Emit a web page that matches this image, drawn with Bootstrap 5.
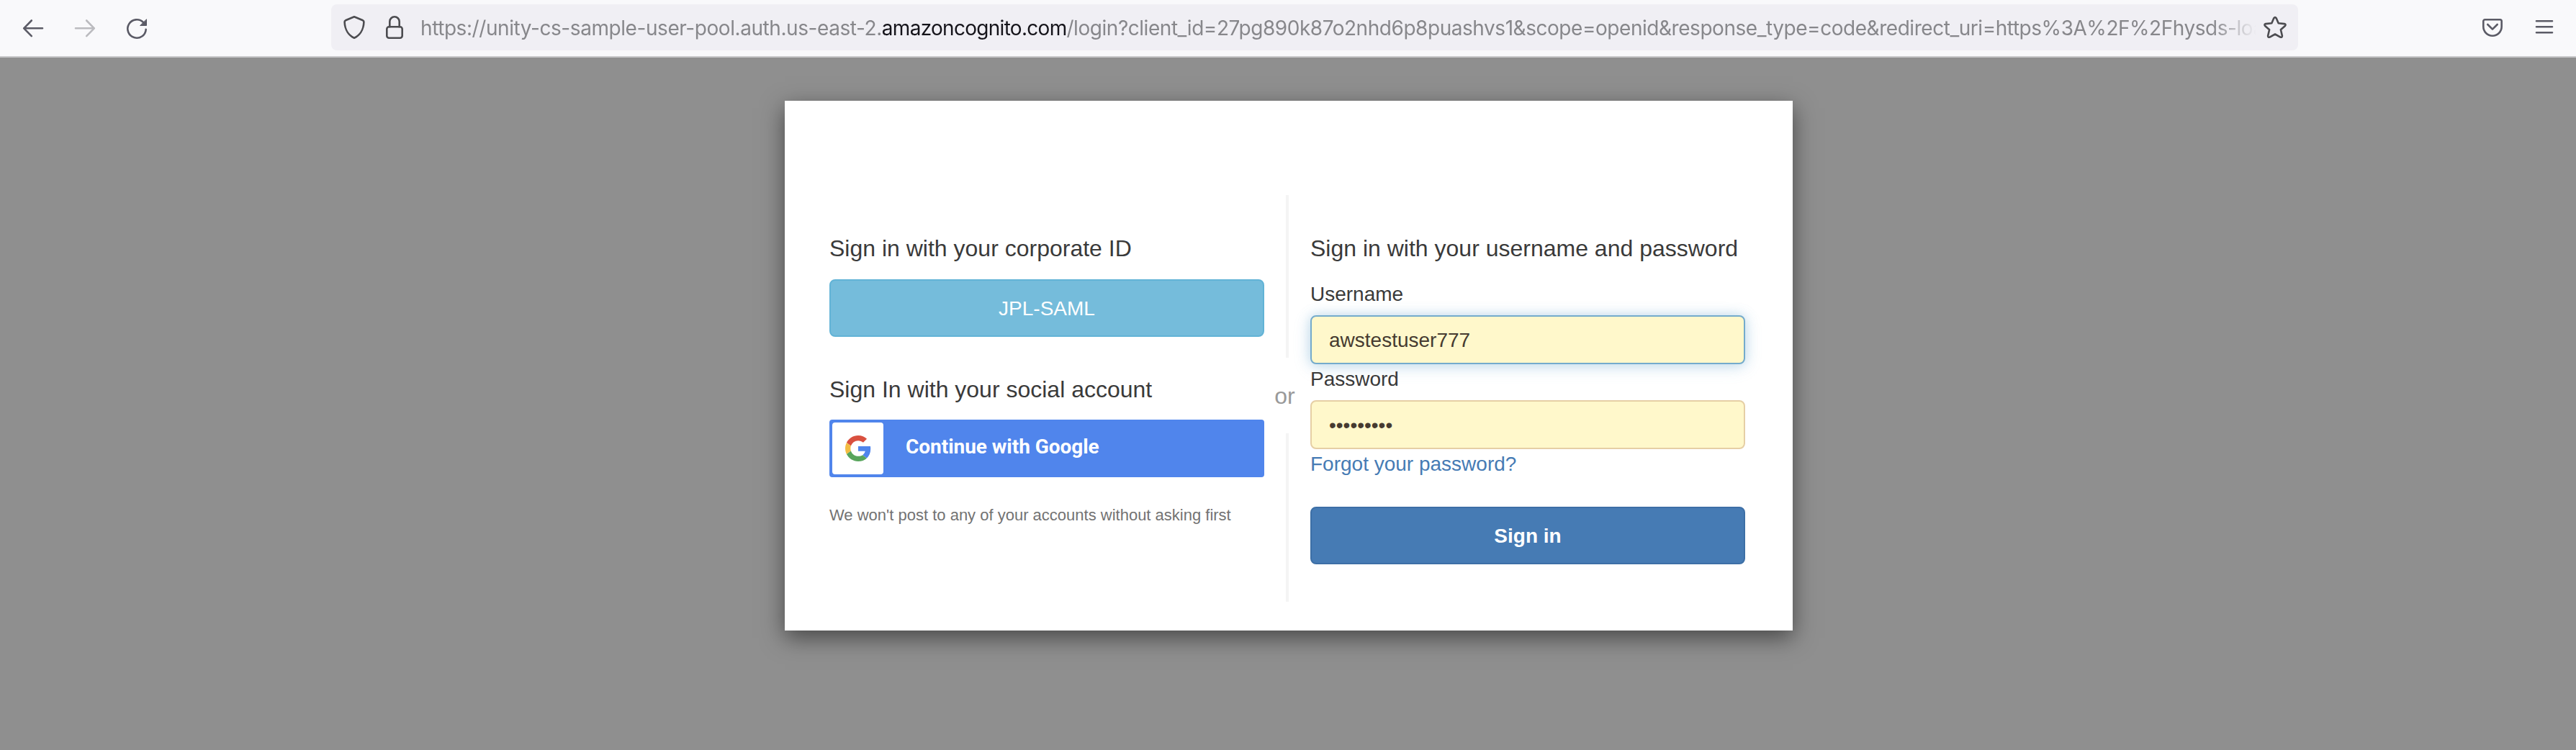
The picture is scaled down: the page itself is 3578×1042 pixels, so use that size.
<!DOCTYPE html>
<html lang="en">
<head>
<meta charset="utf-8">
<title>Signin</title>
<link href="https://cdn.jsdelivr.net/npm/bootstrap@5.3.0/dist/css/bootstrap.min.css" rel="stylesheet">
<style>
body{background:#8f8f8f;font-family:"Liberation Sans",Arial,sans-serif;font-size:28px;line-height:40px;color:#3a3a3a;min-height:1042px;overflow:hidden}
.toolbar{height:80px;background:#f9f9fb;border-bottom:2px solid #c8c8ca;padding:6px 26px 8px 28px}
.toolbar svg{flex:none;display:block;fill:none;stroke:#5b5b66;stroke-width:2.6;stroke-linecap:round;stroke-linejoin:round}
.toolbar .dimmed{stroke:#bbbbbf}
.nav-icons{width:432px;gap:36px}
.tool-icons{gap:36px}
.address{width:2732px;height:64px;background:#f0eff4;border-radius:8px;padding:0 14px}
.address svg{stroke:#4c4c50}
.url{font-family:Inter,sans-serif;font-size:28px;line-height:42px;padding-top:1px;letter-spacing:-.455px;color:#87878b;margin-left:22px;width:2558px;flex:none;white-space:nowrap;-webkit-mask-image:linear-gradient(to right,#000 2488px,transparent 2550px);mask-image:linear-gradient(to right,#000 2488px,transparent 2550px)}
.url .host{letter-spacing:-.43px}
.url b{font-weight:400;color:#15141a;letter-spacing:-.71px}
.login-card{width:1400px;height:736px;background:#fff;margin-left:1090px;margin-top:60px;padding:131px 66px 0 62px;box-shadow:0 10px 30px rgba(0,0,0,.5)}
.pane{width:604px;padding-top:56px}
.pane h1{font-size:32px;line-height:36px;font-weight:400;margin:0 0 25px}
.pane label{line-height:41px;margin-bottom:9px}
.btn-idp{height:80px;border-radius:8px;font-size:28px;line-height:40px;color:#fff;border:2px solid #62b3d6;background:#75bcdb;padding:7px 0 6px;margin-bottom:55px}
.pane h1.social{margin-bottom:24px}
.btn-google{height:80px;border-radius:4px;background:#5085ec;padding:4px;color:#fff;font:700 28px/40px Roboto,sans-serif;gap:31px}
.btn-google span{padding-bottom:4px;letter-spacing:-.04px}
.g-tile{width:71px;height:72px;border-radius:4px;background:#fff}
.note{font-size:22px;line-height:31px;color:#737373;margin-top:37px}
.divider{width:64px}
.bar{width:4px;height:226px;background:#f4f4f4}
.bar-lower{height:234px}
.or{height:105px;font-size:32px;color:#999;padding:1px 7px 0 0}
.field{height:68px;border:2px solid #e6cfa5;border-radius:8px;background:#fff8cb;padding:1px 24px 0;color:#463b30}
.field.active{border-color:#74abcc;box-shadow:0 0 16px rgba(102,165,205,.35),0 4px 24px rgba(102,165,205,.2)}
.forgot{color:#467bb4;text-decoration:none;line-height:41px;margin-bottom:39px}
.btn-signin{height:80px;border-radius:8px;border:2px solid #3d6fa6;background:#467bb4;color:#fff;font-size:28px;line-height:40px;font-weight:700;padding:7px 0 6px}
</style>
<script src="https://cdn.jsdelivr.net/npm/bootstrap@5.3.0/dist/js/bootstrap.bundle.min.js"></script>
</head>
<body>
<header class="toolbar d-flex align-items-center">
  <div class="nav-icons d-flex align-items-center">
    <svg width="36" height="36" viewBox="0 0 36 36"><path d="M31 19.300H5.200M15.800 8.500L5.200 19.300l10.600 10.800"/></svg>
    <svg class="dimmed" width="36" height="36" viewBox="0 0 36 36"><path d="M5 19.300h25.800M20.200 8.500l10.600 10.800-10.600 10.800"/></svg>
    <svg width="36" height="36" viewBox="0 0 36 36"><path d="M30.700 20.800A12.700 12.700 0 1 1 27 11"/><path d="M31.500 7.200v8.300h-8.500z" fill="#5b5b66" stroke-width="1"/></svg>
  </div>
  <div class="address d-flex align-items-center">
    <svg width="36" height="36" viewBox="0 0 36 36"><path d="M18 3.300L30 8.300q1.400.7 1.400 2.200C31 22 25 29.500 18 32.700C11 29.500 5 22 4.600 10.500q0-1.500 1.400-2.200z"/></svg>
    <svg class="ms-4" width="28" height="36" viewBox="0 0 28 36"><rect x="3.300" y="17.300" width="21.400" height="15.400" rx="3"/><path d="M7.300 17.300V10a6.700 6.700 0 0 1 13.400 0v7.300"/></svg>
    <div class="url"><span class="host">https://unity-cs-sample-user-pool.auth.us-east-2.</span><b>amazoncognito.com</b>/login?client_id=27pg890k87o2nhd6p8puashvs1&amp;scope=openid&amp;response_type=code&amp;redirect_uri=https%3A%2F%2Fhysds-loa</div>
    <svg width="36" height="36" viewBox="0 0 36 36"><path d="M16.300 5.300q1.700-2.400 3.400 0L22.700 12.200l8.300.9q2.600.8.900 2.900L25.900 21.300l2 8.400q0 2.800-2.500 1.900L18 27.500l-7.400 4.100q-2.500.9-2.500-1.900l2-8.400L4.100 16q-1.700-2.100.9-2.900l8.300-.9z"/></svg>
  </div>
  <div class="tool-icons d-flex ms-auto">
    <svg width="36" height="36" viewBox="0 0 36 36"><path d="M7.500 7.300h21a2.200 2.200 0 0 1 2.200 2.200V17a12.700 12.700 0 0 1-25.400 0V9.500A2.200 2.200 0 0 1 7.500 7.300z"/><path d="M11.300 14l6.700 6.700 6.700-6.700"/></svg>
    <svg width="36" height="36" viewBox="0 0 36 36"><path d="M7 9.300h22M7 17.300h22M7 25.300h22"/></svg>
  </div>
</header>
<main class="login-card d-flex align-items-start">
  <section class="pane d-flex flex-column">
    <h1>Sign in with your corporate ID</h1>
    <button class="btn btn-idp">JPL-SAML</button>
    <h1 class="social">Sign In with your social account</h1>
    <div class="btn-google d-flex align-items-center">
      <div class="g-tile d-flex align-items-center justify-content-center">
        <svg width="36" height="36" viewBox="0 0 48 48"><path fill="#d9503f" d="M24 9.500c3.540 0 6.710 1.220 9.210 3.600l6.850-6.850C35.900 2.380 30.470 0 24 0 14.620 0 6.510 5.380 2.560 13.220l7.980 6.190C12.430 13.720 17.740 9.500 24 9.500z"/><path fill="#5085ec" d="M46.980 24.550c0-1.570-.15-3.090-.38-4.550H24v9.020h12.940c-.58 2.960-2.260 5.480-4.780 7.180l7.730 6c4.510-4.180 7.090-10.360 7.090-17.650z"/><path fill="#f3bc42" d="M10.530 28.590c-.48-1.450-.76-2.990-.76-4.590s.27-3.140.76-4.590l-7.980-6.190C.92 16.460 0 20.120 0 24c0 3.880.92 7.540 2.560 10.780z"/><path fill="#58a55c" d="M24 48c6.480 0 11.930-2.130 15.890-5.810l-7.730-6c-2.150 1.450-4.920 2.300-8.160 2.300-6.260 0-11.570-4.220-13.470-9.910l-7.980 6.190C6.510 42.620 14.620 48 24 48z"/></svg>
      </div>
      <span>Continue with Google</span>
    </div>
    <div class="note">We won't post to any of your accounts without asking first</div>
  </section>
  <div class="divider d-flex flex-column align-items-center">
    <div class="bar"></div>
    <div class="or d-flex align-items-center">or</div>
    <div class="bar bar-lower"></div>
  </div>
  <section class="pane d-flex flex-column">
    <h1>Sign in with your username and password</h1>
    <label>Username</label>
    <div class="field active d-flex align-items-center">awstestuser777</div>
    <label>Password</label>
    <div class="field d-flex align-items-center">•••••••••</div>
    <a class="forgot" href="#">Forgot your password?</a>
    <button class="btn btn-signin">Sign in</button>
  </section>
</main>
</body>
</html>
